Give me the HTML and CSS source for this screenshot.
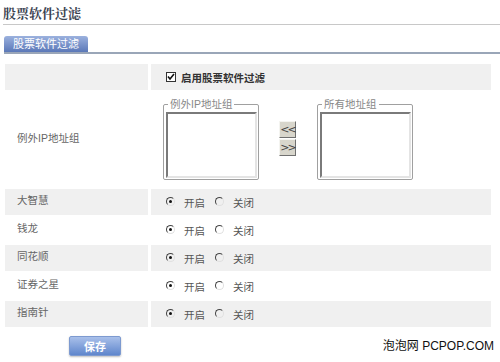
FILE: index.html
```html
<!DOCTYPE html>
<html lang="zh-CN">
<head>
    <meta charset="UTF-8">
    <title>股票软件过滤</title>
    <link rel="stylesheet" href="styles.css">
</head>
<body>
    <div class="page">
        <h1 class="title">股票软件过滤</h1>

        <div class="tabs">
            <span class="tab">股票软件过滤</span>
        </div>

        <div class="form">
            <div class="cell label"></div>
            <div class="cell value gray">
                <span class="check"><svg width="8" height="8" viewBox="0 0 8 8"><path d="M1 3.5 L3 6 L7 1" fill="none" stroke="#111" stroke-width="1.6"/></svg></span>
                <b class="enable">启用股票软件过滤</b>
            </div>

            <div class="cell label ip white">例外IP地址组</div>
            <div class="cell value ipbox white">
                <fieldset class="group">
                    <legend>例外IP地址组</legend>
                    <textarea></textarea>
                </fieldset>
                <div class="moves">
                    <button class="move">&lt;&lt;</button>
                    <button class="move">&gt;&gt;</button>
                </div>
                <fieldset class="group">
                    <legend>所有地址组</legend>
                    <textarea></textarea>
                </fieldset>
            </div>

            <div class="cell label">大智慧</div>
            <div class="cell value gray">
                <span class="radio on"></span><span class="opt">开启</span>
                <span class="radio"></span><span class="opt">关闭</span>
            </div>

            <div class="cell label white">钱龙</div>
            <div class="cell value white">
                <span class="radio on"></span><span class="opt">开启</span>
                <span class="radio"></span><span class="opt">关闭</span>
            </div>

            <div class="cell label">同花顺</div>
            <div class="cell value gray">
                <span class="radio on"></span><span class="opt">开启</span>
                <span class="radio"></span><span class="opt">关闭</span>
            </div>

            <div class="cell label white">证券之星</div>
            <div class="cell value white">
                <span class="radio on"></span><span class="opt">开启</span>
                <span class="radio"></span><span class="opt">关闭</span>
            </div>

            <div class="cell label">指南针</div>
            <div class="cell value gray">
                <span class="radio on"></span><span class="opt">开启</span>
                <span class="radio"></span><span class="opt">关闭</span>
            </div>
        </div>

        <div class="actions">
            <button class="save">保存</button>
        </div>

        <div class="mark">泡泡网 PCPOP.COM</div>
    </div>
</body>
</html>
```

FILE: styles.css
```css
body {
    margin: 0;
    background-color: #fff;
    font-family: "Liberation Sans", "Noto Sans CJK SC", sans-serif;
    font-size: 10.5px;
    color: #666;
}

.page {
    position: relative;
    width: 500px;
    height: 362px;
    overflow: hidden;
}

.title {
    margin: 0 0 0 3px;
    height: 24px;
    line-height: 26px;
    font-size: 13px;
    font-weight: bold;
    color: #3a4250;
    font-family: "Noto Serif CJK SC", "Noto Sans CJK SC", serif;
    border-bottom: 1px solid #c8c8c8;
}

.tabs {
    margin: 11px 0 0 4px;
    height: 16px;
    border-bottom: 2px solid #9aa6b8;
}

.tab {
    display: inline-block;
    width: 84px;
    height: 16px;
    line-height: 17px;
    font-size: 11px;
    text-align: center;
    color: #fff;
    border-radius: 3px 3px 0 0;
    background: linear-gradient(#9bb1de, #5b78b8);
}

.form {
    display: grid;
    grid-template-columns: 143px 340px;
    grid-template-rows: 26px 95px;
    grid-auto-rows: 26px;
    column-gap: 3px;
    row-gap: 2px;
    margin: 10px 0 0 5px;
}

.cell {
    background-color: #f0f0f0;
}

.cell.white {
    background-color: #fff;
}

.label {
    padding-left: 12px;
    line-height: 22px;
}

.value {
    display: flex;
    align-items: center;
    padding-left: 12px;
}

.ip {
    line-height: 92px;
}

.ipbox {
    align-items: flex-start;
}

.check {
    display: inline-flex;
    align-items: center;
    justify-content: center;
    width: 8px;
    height: 8px;
    border: 1px solid #333;
    background-color: #fff;
    margin: 0 5px 0 3px;
}

.enable {
    color: #333;
}

.group {
    margin: 6px 0 0;
    padding: 0 1px 1px 2px;
    border: 1px solid #a0a0a0;
    border-radius: 2px;
    width: 91px;
}

.group legend {
    padding: 0 2px;
    margin-left: 2px;
    color: #888;
    font-size: 10.5px;
    line-height: 12px;
}

.group textarea {
    display: block;
    width: 91px;
    height: 66px;
    margin: 2px 0 0;
    padding: 0;
    box-sizing: border-box;
    border: 2px solid;
    border-color: #7a7a7a #e4e4e4 #e4e4e4 #7a7a7a;
    resize: none;
}

.moves {
    display: flex;
    flex-direction: column;
    gap: 1px;
    margin: 29px 21px 0 20px;
}

.move {
    width: 17px;
    height: 17px;
    padding: 0;
    font-size: 11px;
    font-family: "DejaVu Sans", sans-serif;
    color: #444;
    border: 1px solid;
    border-color: #f4f4f0 #707070 #707070 #f4f4f0;
    background-color: #d8d6cc;
    letter-spacing: -2px;
}

.radio {
    box-sizing: border-box;
    width: 9px;
    height: 9px;
    border-radius: 50%;
    border: 1px solid;
    border-color: #444 #e0e0e0 #e0e0e0 #444;
    margin: 0 9px 2px 3px;
    display: inline-flex;
    align-items: center;
    justify-content: center;
}

.radio.on::after {
    content: "";
    width: 3px;
    height: 3px;
    border-radius: 50%;
    background-color: #111;
}

.opt {
    margin-right: 7px;
    color: #555;
}

.actions {
    margin: 9px 0 0 69px;
}

.save {
    width: 52px;
    height: 20px;
    padding: 0;
    color: #fff;
    font-weight: bold;
    font-size: 11px;
    font-family: inherit;
    border: 1px solid #7d9ad0;
    border-radius: 2px;
    background: linear-gradient(#a9c0ea, #5f86cc);
    box-shadow: 0 1px 2px rgba(0, 0, 0, 0.25);
}

.mark {
    position: absolute;
    right: 6px;
    bottom: 9px;
    color: #111;
    font-size: 12px;
}
```
